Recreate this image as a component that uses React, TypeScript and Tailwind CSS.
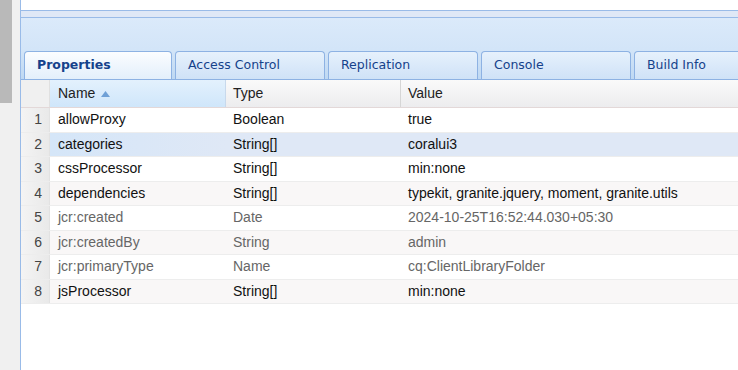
const rows = [
  { n: 1, name: "allowProxy", type: "Boolean", value: "true" },
  { n: 2, name: "categories", type: "String[]", value: "coralui3" },
  { n: 3, name: "cssProcessor", type: "String[]", value: "min:none" },
  { n: 4, name: "dependencies", type: "String[]", value: "typekit, granite.jquery, moment, granite.utils" },
  { n: 5, name: "jcr:created", type: "Date", value: "2024-10-25T16:52:44.030+05:30", prot: true },
  { n: 6, name: "jcr:createdBy", type: "String", value: "admin", prot: true },
  { n: 7, name: "jcr:primaryType", type: "Name", value: "cq:ClientLibraryFolder", prot: true },
  { n: 8, name: "jsProcessor", type: "String[]", value: "min:none" },
];

const tabs = ["Properties", "Access Control", "Replication", "Console", "Build Info"];

const App = () => {
  return (
    <div className="w-[738px] h-[370px] flex bg-white overflow-hidden" style={{ fontFamily: "'Liberation Sans', Arial, sans-serif" }}>
      {/* left splitter */}
      <div className="w-[20px] shrink-0 bg-[#f0f0f0]">
        <div className="w-[12px] h-[103px] bg-[#b9b9b9]" />
      </div>

      <div className="flex-1 flex flex-col border-l border-[#99bbe8] min-w-0">
        <div className="h-[11px] bg-white border-b border-[#99bbe8]" />
        <div className="h-[6px] bg-[#dfe8f6]" />

        {/* tab strip */}
        <div className="h-[63px] border-t border-[#99bbe8] bg-gradient-to-b from-[#dbeafa] via-[#d3e5f8] to-[#bed8f2] flex flex-col">
          <div className="h-[32px]" />
          <div className="flex items-end gap-[3px] pl-[3px] h-[30px] border-b border-[#8db2e3]">
            {tabs.map((t, i) => (
              <div
                key={t}
                className={
                  "shrink-0 h-[28px] rounded-t-[4px] border border-b-0 border-[#8db2e3] flex items-center pl-[12px] text-[12.5px] text-[#15428b] " +
                  (i === 0
                    ? "w-[148px] bg-gradient-to-b from-[#fbfdff] to-[#e3effb] font-bold"
                    : "w-[150px] bg-gradient-to-b from-[#e6f1fc] to-[#cfe2f7]")
                }
                style={{ fontFamily: "'DejaVu Sans', Tahoma, sans-serif" }}
              >
                {t}
              </div>
            ))}
          </div>
        </div>

        {/* grid header */}
        <div className="flex h-[28px] border-b border-[#e3d8d8] bg-gradient-to-b from-[#fafafa] to-[#ececee] text-[14px] text-[#222]">
          <div className="w-[29px] shrink-0 bg-[#f0f0f0] border-r border-[#e0e0e0]" />
          <div className="w-[176px] shrink-0 flex items-center pl-[8px] bg-gradient-to-b from-[#e3f1fd] to-[#cfe6fa] border-r border-[#c8d9ec]">
            Name
            <svg width="9" height="6" viewBox="0 0 9 6" className="ml-[6px]">
              <path d="M4.5 0 L9 6 L0 6 Z" fill="#6fa0d6" />
            </svg>
          </div>
          <div className="w-[175px] shrink-0 flex items-center pl-[7px] border-r border-[#d6d6d6]">Type</div>
          <div className="flex-1 flex items-center pl-[7px]">Value</div>
        </div>

        {/* grid rows */}
        <div className="flex flex-col text-[14px]">
          {rows.map((r) => {
            const bg = r.n === 2 ? "bg-[#dfe8f6]" : r.n % 2 === 0 ? "bg-[#f9f7f7]" : "bg-white";
            const color = r.prot ? "text-[#666]" : "text-[#111]";
            return (
              <div key={r.n} className={"flex h-[24.5px] border-b border-[#ededed] " + bg + " " + color}>
                <div className="w-[29px] shrink-0 bg-gradient-to-r from-[#f4f4f4] to-[#e9e9e9] border-r border-[#e2e2e2] flex items-center justify-end pr-[7px] text-[#444]">
                  {r.n}
                </div>
                <div className={"w-[176px] shrink-0 flex items-center pl-[8px] " + (r.n === 2 ? "bg-gradient-to-r from-[#d5e6f8] to-[#dfe8f6]" : "")}>
                  {r.name}
                </div>
                <div className="w-[175px] shrink-0 flex items-center pl-[7px]">{r.type}</div>
                <div className="flex-1 flex items-center pl-[7px] whitespace-nowrap">{r.value}</div>
              </div>
            );
          })}
        </div>
      </div>
    </div>
  );
};

export default App;
